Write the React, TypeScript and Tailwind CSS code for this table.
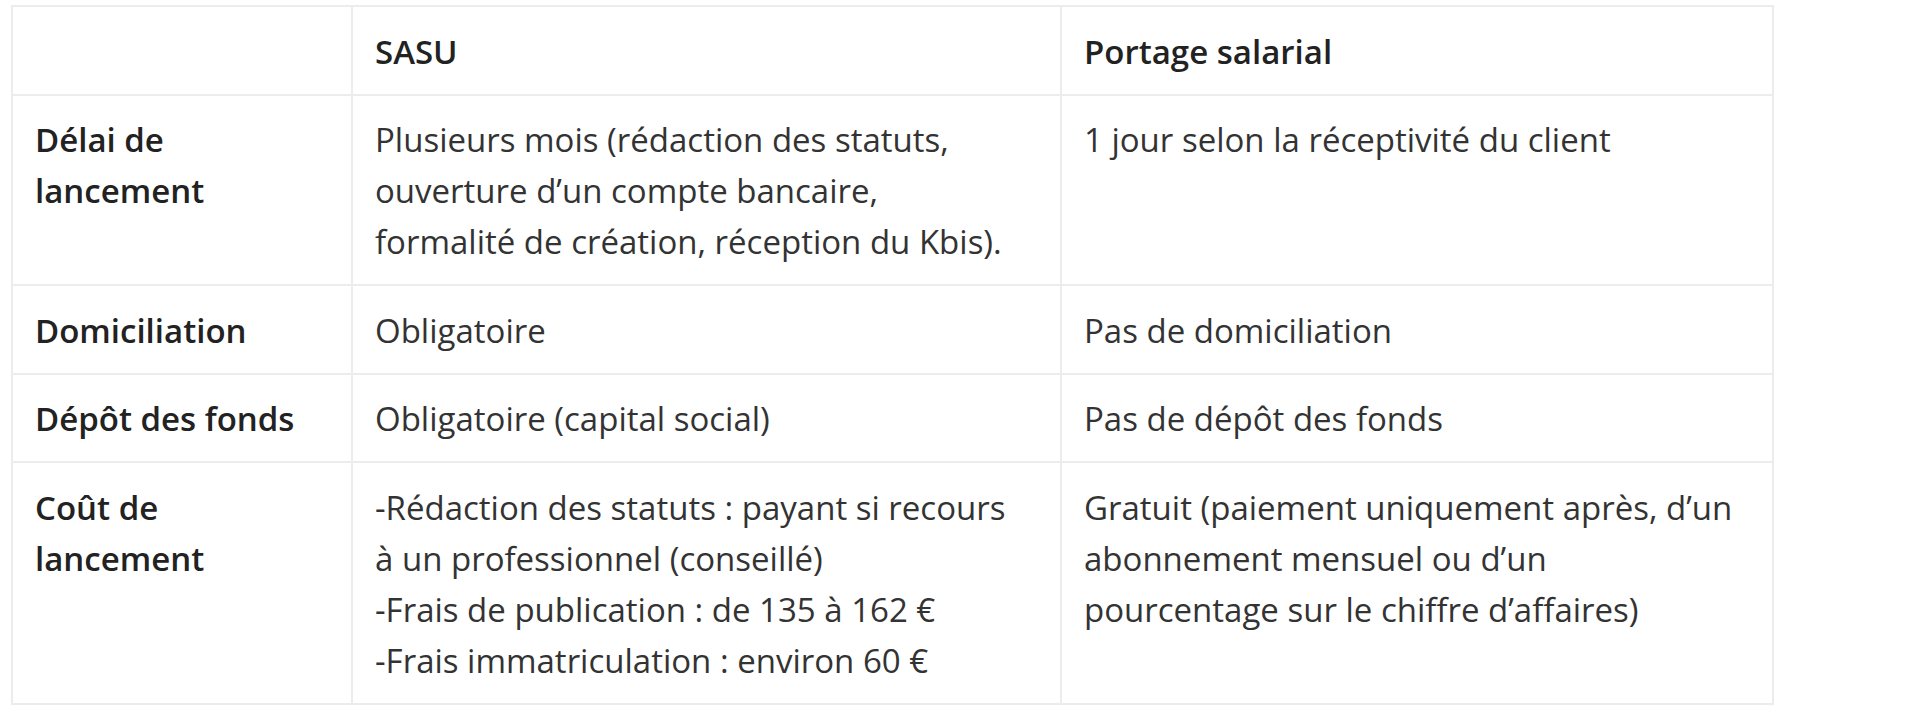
import type { ReactNode } from "react";

type Row = {
  label: ReactNode;
  sasu: ReactNode;
  portage: ReactNode;
};

const rows: Row[] = [
  {
    label: (
      <>
        Délai de
        <br />
        lancement
      </>
    ),
    sasu: (
      <>
        Plusieurs mois (rédaction des statuts,
        <br />
        ouverture d’un compte bancaire,
        <br />
        formalité de création, réception du Kbis).
      </>
    ),
    portage: "1 jour selon la réceptivité du client",
  },
  {
    label: "Domiciliation",
    sasu: "Obligatoire",
    portage: "Pas de domiciliation",
  },
  {
    label: "Dépôt des fonds",
    sasu: "Obligatoire (capital social)",
    portage: "Pas de dépôt des fonds",
  },
  {
    label: (
      <>
        Coût de
        <br />
        lancement
      </>
    ),
    sasu: (
      <>
        -Rédaction des statuts : payant si recours
        <br />
        à un professionnel (conseillé)
        <br />
        -Frais de publication : de 135 à 162 €
        <br />
        -Frais immatriculation : environ 60 €
      </>
    ),
    portage: (
      <>
        Gratuit (paiement uniquement après, d’un
        <br />
        abonnement mensuel ou d’un
        <br />
        pourcentage sur le chiffre d’affaires)
      </>
    ),
  },
];

const cell = "border-2 border-[#ececec] pl-[22px] pr-4 pt-[18.5px] pb-[17px] align-top";

export default function App() {
  return (
    <div className="min-h-screen bg-white pl-[11px] pt-[5px] font-['Open_Sans',sans-serif] text-[33px] leading-[51px]">
      <table className="w-[1761px] table-fixed border-collapse border-2 border-[#ececec]">
        <colgroup>
          <col className="w-[340px]" />
          <col className="w-[709px]" />
          <col className="w-[712px]" />
        </colgroup>
        <thead>
          <tr className="text-left text-[#222]">
            <th className={cell} />
            <th className={cell + " font-semibold"}>SASU</th>
            <th className={cell + " font-semibold"}>Portage salarial</th>
          </tr>
        </thead>
        <tbody>
          {rows.map((r, i) => (
            <tr key={i}>
              <td className={cell + " font-semibold text-[#222]"}>{r.label}</td>
              <td className={cell + " text-[#333]"}>{r.sasu}</td>
              <td className={cell + " text-[#333]"}>{r.portage}</td>
            </tr>
          ))}
        </tbody>
      </table>
    </div>
  );
}
